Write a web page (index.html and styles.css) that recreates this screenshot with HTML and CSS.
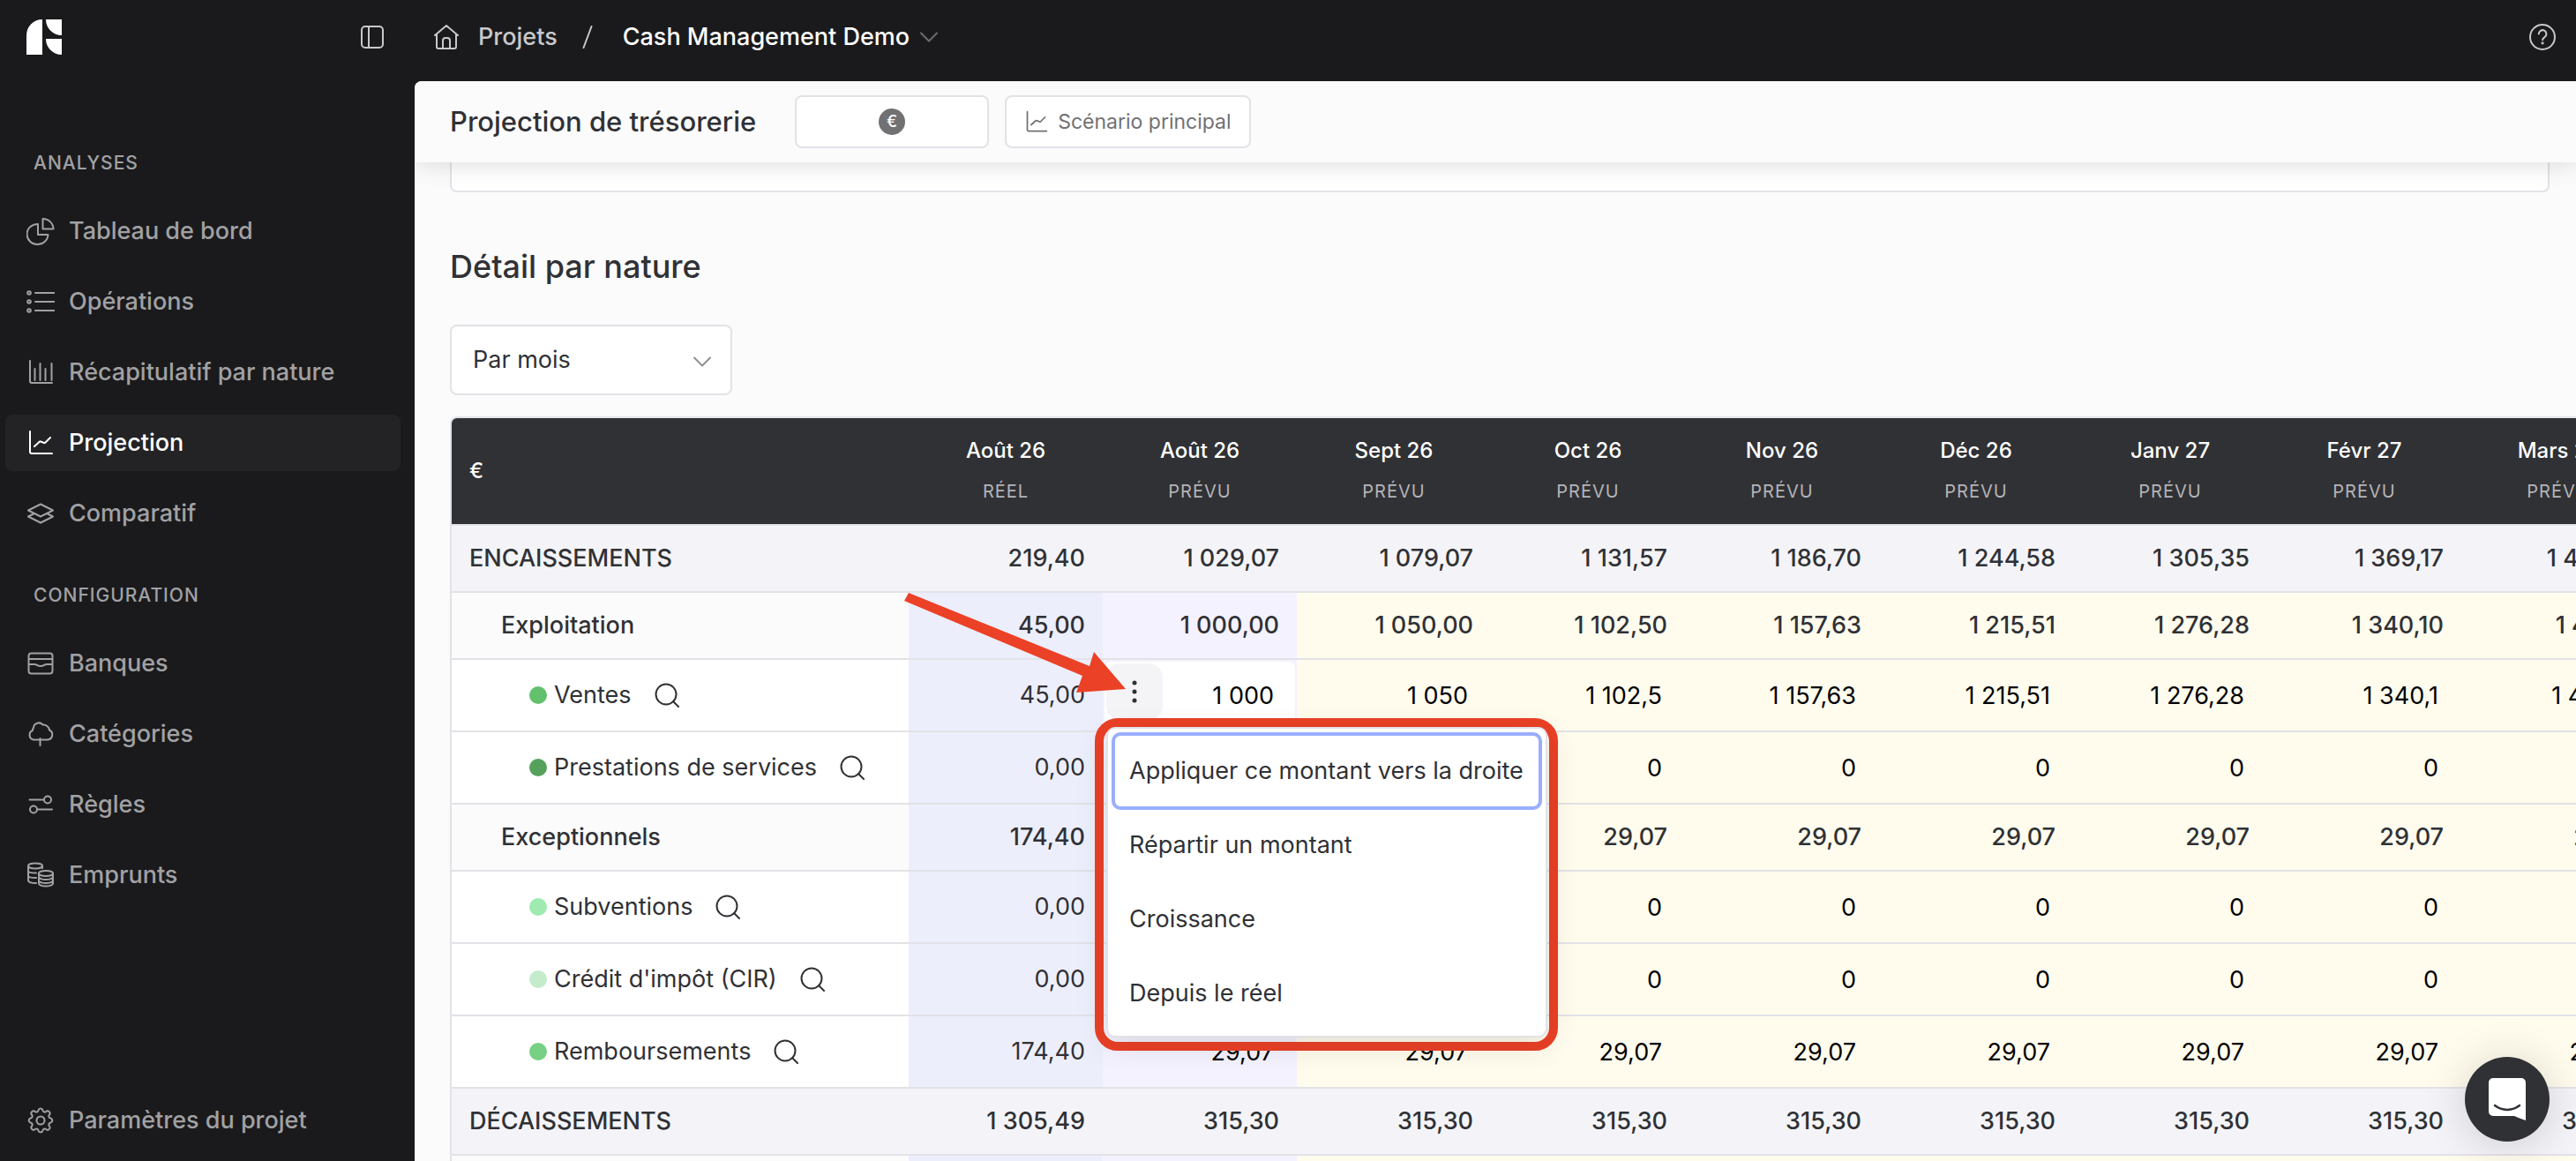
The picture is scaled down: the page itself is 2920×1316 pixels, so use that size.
FILE: index.html
```html
<!DOCTYPE html>
<html lang="fr">
  <head>
    <meta charset="utf-8">
    <title>Projection de trésorerie</title>
    <link rel="stylesheet" href="styles.css">
  </head>
  <body>
    <aside class="sidebar">
      <div class="sidebar-top">
        <a href="#" class="logo" aria-label="Accueil">
          <svg width="40" height="40" viewBox="0 0 40 40"><path d="M18 0v40H0V18A18 18 0 0 1 18 0zM22 0h18v18A18 18 0 0 1 22 0zM22 22h18v18A18 18 0 0 1 22 22z"/></svg>
        </a>
        <button type="button" class="icon-btn" aria-label="Réduire le menu">
          <svg width="32" height="32" viewBox="0 0 32 32"><rect x="4" y="4" width="24" height="24" rx="4"/><path d="M12 4v24"/></svg>
        </button>
      </div>
      <nav class="nav">
        <h3>ANALYSES</h3>
        <a href="#"><svg viewBox="0 0 32 32"><path d="M13 8v12h11.500A12 11.500 0 1 1 13 8z"/><path d="M18.500 2v11.500H30.500A12 11.500 0 0 0 18.500 2z"/></svg>Tableau de bord</a>
        <a href="#"><svg viewBox="0 0 32 32"><circle cx="3" cy="6" r="1.800"/><circle cx="3" cy="16" r="1.800"/><circle cx="3" cy="26" r="1.800"/><path d="M10 6h22M10 16h22M10 26h22"/></svg>Opérations</a>
        <a href="#"><svg viewBox="0 0 32 32"><path d="M4 3v23a2 2 0 0 0 2 2h23M9.500 12v13M15.500 6v19M21.500 12v13M28.500 6v19"/></svg>Récapitulatif par nature</a>
        <a href="#" class="active"><svg viewBox="0 0 32 32"><path d="M4 3v23a2 2 0 0 0 2 2h23M9 20l6-5.500a1 1 0 0 1 1 0l4 1.500a1 1 0 0 0 1 0l6-6"/></svg>Projection</a>
        <a href="#"><svg viewBox="0 0 32 32"><path d="M16 5.500l14 7-14 7-14-7z"/><path d="M8 16.500l-6 3 14 7 14-7-6-3"/></svg>Comparatif</a>
        <h3 class="second">CONFIGURATION</h3>
        <a href="#"><svg viewBox="0 0 32 32"><rect x="2.500" y="4.500" width="27" height="23" rx="3"/><path d="M3 11h26M3 17h6c3 0 3 2 7 2s4-2 7-2h6"/></svg>Banques</a>
        <a href="#"><svg viewBox="0 0 32 32"><path d="M8 22.500a5.500 5.500 0 0 1-1-10.500 4 4 0 0 1 1-3 6 6 0 0 1 10.500-3.500 7 7 0 0 1 7.500 6 5.800 5.800 0 0 1-2 11zM15.500 21v8"/></svg>Catégories</a>
        <a href="#"><svg viewBox="0 0 32 32"><path d="M3.500 10.500h16M12 21.500h17"/><circle cx="24" cy="10.500" r="4"/><circle cx="8" cy="21.500" r="4"/></svg>Règles</a>
        <a href="#"><svg viewBox="0 0 32 32"><ellipse cx="10" cy="5.500" rx="8" ry="3"/><path d="M2 5.500V22c0 1.500 3 3 9 3M18 5.500V8M2 11c0 1.500 3 2.600 9 2.600M2 16.500c0 1.500 3 2.600 9 2.600"/><ellipse cx="22" cy="14" rx="8" ry="3"/><path d="M14 14v11.500c0 1.600 3.500 3 8 3s8-1.400 8-3V14M14 18c0 1.600 3.500 3 8 3s8-1.400 8-3M14 22c0 1.600 3.500 3 8 3s8-1.400 8-3"/></svg>Emprunts</a>
        <a href="#" class="last"><svg viewBox="0 0 32 32"><path d="M13.500 4.500a2.600 2.600 0 0 1 5 0c.4 1.900 2 2.500 3.600 1.600a2.600 2.600 0 0 1 3.700 3.700c-1 1.600-.3 3.200 1.600 3.700a2.600 2.600 0 0 1 0 5c-1.900.5-2.600 2.100-1.600 3.700a2.600 2.600 0 0 1-3.700 3.700c-1.600-1-3.200-.3-3.600 1.600a2.600 2.600 0 0 1-5 0c-.4-1.900-2-2.600-3.600-1.600a2.600 2.600 0 0 1-3.700-3.700c1-1.600.3-3.200-1.600-3.700a2.600 2.600 0 0 1 0-5c1.900-.5 2.600-2.100 1.600-3.700a2.600 2.600 0 0 1 3.700-3.700c1.600.9 3.200.3 3.600-1.600z"/><circle cx="16" cy="16" r="4.500"/></svg>Paramètres du projet</a>
      </nav>
    </aside>

    <div class="content">
      <header class="topbar">
        <a href="#" class="crumb">
          <svg width="32" height="32" viewBox="0 0 32 32"><path d="M3 14L16 3l13 11M5 12.500V27a2 2 0 0 0 2 2h18a2 2 0 0 0 2-2V12.500M12 29v-9a3 3 0 0 1 3-3h2a3 3 0 0 1 3 3v9"/></svg>
          Projets
        </a>
        <svg class="slash" width="12" height="26" viewBox="0 0 12 26"><path d="M10.500 1l-9 24"/></svg>
        <button type="button" class="project">
          Cash Management Demo
          <svg width="20" height="12" viewBox="0 0 20 12"><path d="M1 1.500l9 9 9-9"/></svg>
        </button>
        <button type="button" class="icon-btn help" aria-label="Aide">
          <svg width="32" height="32" viewBox="0 0 32 32"><circle cx="16" cy="16" r="14"/><path d="M11.800 12.500a4.300 4.300 0 1 1 6.600 3.600c-1.500 1-2.300 1.600-2.300 3.200"/><circle cx="16.100" cy="22.800" r=".6"/></svg>
        </button>
      </header>

      <main class="main">
        <div class="page-head">
          <h1>Projection de trésorerie</h1>
          <button type="button" class="btn currency" aria-label="Devise"><span>€</span></button>
          <button type="button" class="btn">
            <svg width="28" height="28" viewBox="0 0 32 32"><path d="M4 3v23a2 2 0 0 0 2 2h23M9 20l6-5.500a1 1 0 0 1 1 0l4 1.500a1 1 0 0 0 1 0l6-6"/></svg>
            Scénario principal
          </button>
        </div>

        <div class="chart-card"></div>

        <h2>Détail par nature</h2>

        <div class="select">
          <select aria-label="Période">
            <option>Par mois</option>
            <option>Par trimestre</option>
            <option>Par an</option>
          </select>
          <svg width="20" height="12" viewBox="0 0 20 12"><path d="M1 1.500l9 9 9-9"/></svg>
        </div>

        <div class="table-wrap">
          <table>
            <colgroup><col class="col-name"><col span="9" class="col-month"></colgroup>
            <thead>
              <tr id="months"><th scope="col" class="unit">€</th></tr>
            </thead>
            <tbody id="rows"></tbody>
          </table>

          <button type="button" class="cell-btn" aria-label="Options du montant">
            <svg width="6" height="26" viewBox="0 0 6 26"><circle cx="3" cy="3" r="2.500"/><circle cx="3" cy="13" r="2.500"/><circle cx="3" cy="23" r="2.500"/></svg>
          </button>
          <div class="menu-frame">
            <div class="menu" role="menu">
              <button type="button" role="menuitem" class="focused">Appliquer ce montant vers la droite</button>
              <button type="button" role="menuitem">Répartir un montant</button>
              <button type="button" role="menuitem">Croissance</button>
              <button type="button" role="menuitem">Depuis le réel</button>
            </div>
          </div>
          <svg class="arrow" width="252" height="116" viewBox="0 0 252 116"><path d="M5 0L210 83l5-16 36 42-56 4 7-19L0 9z"/></svg>
        </div>
      </main>
    </div>

    <button type="button" class="chat" aria-label="Ouvrir la messagerie">
      <svg width="42" height="48" viewBox="0 0 42 48"><path class="bubble" d="M5 0h32a5 5 0 0 1 5 5v43c-5-1.500-9-3.500-13-5H5a5 5 0 0 1-5-5V5a5 5 0 0 1 5-5z"/><path class="smile" d="M7 31c8 6.500 20 6.500 28 0"/></svg>
    </button>

    <script src="table.js"></script>
  </body>
</html>
```
FILE: table.js
```js
(function() {
  var months = ['Août 26', 'Août 26', 'Sept 26', 'Oct 26', 'Nov 26', 'Déc 26', 'Janv 27', 'Févr 27', 'Mars 27'];

  // the first value is the actual amount, the next ones are planned
  var rows = [
    { type: 'total', name: 'ENCAISSEMENTS', values: ['219,40', '1 029,07', '1 079,07', '1 131,57', '1 186,70', '1 244,58', '1 305,35', '1 369,17', '1 436,18'] },
    { type: 'group', name: 'Exploitation', values: ['45,00', '1 000,00', '1 050,00', '1 102,50', '1 157,63', '1 215,51', '1 276,28', '1 340,10', '1 407,11'] },
    { type: 'item', name: 'Ventes', color: '#63c06c', values: ['45,00', '1 000', '1 050', '1 102,5', '1 157,63', '1 215,51', '1 276,28', '1 340,1', '1 407,11'] },
    { type: 'item', name: 'Prestations de services', color: '#55a15c', values: ['0,00', '0', '0', '0', '0', '0', '0', '0', '0'] },
    { type: 'group', name: 'Exceptionnels', values: ['174,40', '29,07', '29,07', '29,07', '29,07', '29,07', '29,07', '29,07', '29,07'] },
    { type: 'item', name: 'Subventions', color: '#9eeab0', values: ['0,00', '0', '0', '0', '0', '0', '0', '0', '0'] },
    { type: 'item', name: "Crédit d'impôt (CIR)", color: '#c5ebcd', values: ['0,00', '0', '0', '0', '0', '0', '0', '0', '0'] },
    { type: 'item', name: 'Remboursements', color: '#77d083', values: ['174,40', '29,07', '29,07', '29,07', '29,07', '29,07', '29,07', '29,07', '29,07'] },
    { type: 'total', name: 'DÉCAISSEMENTS', values: ['1 305,49', '315,30', '315,30', '315,30', '315,30', '315,30', '315,30', '315,30', '315,30'] },
    { type: 'group', name: '', values: ['', '', '', '', '', '', '', '', ''] }
  ];

  var search = '<svg width="28" height="28" viewBox="0 0 28 28"><circle cx="13" cy="13" r="11.500"/><path d="M21 21l6 6"/></svg>';

  var head = '';
  months.forEach(function(m, i) {
    head += '<th scope="col">' + m + '<small>' + (i ? 'PRÉVU' : 'RÉEL') + '</small></th>';
  });
  document.getElementById('months').innerHTML += head;

  var s = '';
  rows.forEach(function(row) {
    var name = row.name;
    if (row.type === 'item') {
      name = '<div class="name"><i class="dot" style="background: ' + row.color + '"></i>' + row.name +
        '<button type="button" aria-label="Rechercher ' + row.name + '">' + search + '</button></div>';
    }
    s += '<tr class="' + row.type + '"><th scope="row">' + name + '</th>';
    row.values.forEach(function(v, i) {
      v = v.replace(' ', '\u00a0');
      if (row.type === 'item' && i) {
        v = '<input type="text" value="' + v + '" aria-label="' + row.name + ', ' + months[i] + '">';
      }
      s += '<td>' + v + '</td>';
    });
    s += '</tr>';
  });
  document.getElementById('rows').innerHTML = s;
}());
```
FILE: styles.css
```css
* {
  box-sizing: border-box;
}
body {
  margin: 0;
  display: flex;
  height: 100vh;
  overflow: hidden;
  background: #1a1a1c;
  color: #303135;
  font-family: Inter, "Liberation Sans", sans-serif;
  font-size: 27px;
  line-height: 36px;
}
svg {
  flex: none;
  fill: none;
  stroke: currentColor;
  stroke-width: 2;
  stroke-linecap: round;
  stroke-linejoin: round;
}
button, input, select {
  font: inherit;
  color: inherit;
}
button {
  padding: 0;
  border: 0;
  background: none;
}
a {
  color: inherit;
  text-decoration: none;
}
h1, h2, h3 {
  margin: 0;
  font-weight: 500;
}

/* sidebar */
.sidebar {
  flex: none;
  width: 470px;
  padding: 0 16px 14px 6px;
  display: flex;
  flex-direction: column;
  color: #a1a1a4;
}
.sidebar-top {
  display: flex;
  align-items: center;
  justify-content: space-between;
  height: 84px;
  padding: 0 16px 0 24px;
}
.logo, .icon-btn {
  display: flex;
}
.logo svg {
  fill: #fff;
  stroke: none;
}
.icon-btn {
  color: #c8c8ca;
}
.nav {
  flex: 1;
  display: flex;
  flex-direction: column;
  gap: 16px;
}
.nav h3 {
  margin-top: 86px;
  margin-bottom: 14px;
  padding-left: 32px;
  font-size: 21px;
  line-height: 30px;
  letter-spacing: 1px;
}
.nav h3.second {
  margin-top: 30px;
}
.nav a {
  display: flex;
  align-items: center;
  gap: 16px;
  height: 64px;
  padding-left: 24px;
  border-radius: 8px;
  font-weight: 500;
}
.nav a svg {
  width: 32px;
  height: 32px;
}
.nav a.active {
  background: #232325;
  color: #fff;
}
.nav a.last {
  margin-top: auto;
}

/* top bar */
.content {
  flex: 1;
  min-width: 0;
  display: flex;
  flex-direction: column;
}
.topbar {
  flex: none;
  display: flex;
  align-items: center;
  height: 92px;
  padding: 0 22px 8px 20px;
  color: #c8c8ca;
}
.crumb {
  display: flex;
  align-items: center;
  gap: 20px;
  font-weight: 500;
}
.slash {
  margin: 0 34px 0 28px;
}
.project {
  display: flex;
  align-items: center;
  gap: 12px;
  color: #fff;
  font-weight: 500;
}
.project svg {
  color: #6c6c70;
}
.help {
  margin-left: auto;
}

/* page */
.main {
  flex: 1;
  min-height: 0;
  overflow: hidden;
  background: #fbfbfc;
  border-top-left-radius: 8px;
}
.page-head {
  position: relative;
  z-index: 1;
  display: flex;
  align-items: center;
  gap: 18px;
  height: 92px;
  padding: 0 40px;
  background: #fbfbfc;
  box-shadow: 0 0 30px rgba(0, 0, 0, .16);
}
h1 {
  margin-right: 26px;
  font-size: 31px;
}
.btn {
  display: flex;
  align-items: center;
  justify-content: center;
  gap: 10px;
  height: 60px;
  padding: 0 20px;
  border: 2px solid #e2e2e7;
  border-radius: 8px;
  background: #fff;
  color: #717174;
  font-size: 23px;
}
.currency {
  width: 220px;
}
.currency span {
  width: 30px;
  height: 30px;
  border-radius: 50%;
  background: #717174;
  color: #fff;
  font-size: 18px;
  font-weight: 500;
  line-height: 30px;
}
.chart-card {
  height: 34px;
  margin: 0 30px 0 40px;
  border: 2px solid #e2e2e7;
  border-top: 0;
  border-radius: 0 0 8px 8px;
  background: #fff;
}
h2 {
  margin: 64px 40px 46px;
  font-size: 36px;
  line-height: 40px;
}
.select {
  position: relative;
  width: 320px;
  margin: 0 40px 24px;
}
.select select {
  display: block;
  width: 100%;
  height: 80px;
  padding: 0 24px;
  border: 2px solid #e2e2e7;
  border-radius: 8px;
  background: #fff;
  appearance: none;
}
.select svg {
  position: absolute;
  right: 24px;
  top: 36px;
  color: #8f8f93;
  pointer-events: none;
}

/* table */
.table-wrap {
  position: relative;
  margin-left: 40px;
  border: 2px solid #e2e2e7;
  border-right: 0;
  border-radius: 8px 0 0 0;
}
table {
  table-layout: fixed;
  width: 2498px;
  border-spacing: 0;
}
.col-name {
  width: 518px;
}
.col-month {
  width: 220px;
}
th, td {
  padding: 0;
  border-bottom: 2px solid #e2e2e7;
}
thead th {
  height: 122px;
  background: #303135;
  color: #fff;
  font-size: 24px;
  font-weight: 500;
  line-height: 32px;
}
thead th:first-child {
  border-top-left-radius: 6px;
}
thead .unit {
  padding-left: 20px;
  text-align: left;
}
thead small {
  display: block;
  margin-top: 14px;
  color: #b4b4b7;
  font-size: 20px;
  font-weight: 400;
  letter-spacing: 1px;
}
tbody th {
  padding-left: 20px;
  text-align: left;
  font-weight: 500;
  background: #fff;
}
tbody td {
  height: 76px;
  padding-right: 20px;
  background: #fffcee;
  text-align: right;
  font-weight: 500;
}
td:nth-child(2) {
  background: #edeefc;
}
td:nth-child(3) {
  background: #f4f2fe;
}
.total th, .total td {
  background: #f4f4f8;
}
.group th {
  padding-left: 56px;
  background: #fbfbfc;
}
.item th, .item td {
  height: 82px;
  font-weight: 400;
}
.item th {
  padding-left: 88px;
}
.name {
  display: flex;
  align-items: center;
  gap: 8px;
}
.name button {
  display: flex;
  margin-left: 18px;
}
.dot {
  width: 20px;
  height: 20px;
  border-radius: 50%;
}
.item td:nth-child(n+3) {
  padding: 2px;
}
td input {
  display: block;
  width: 100%;
  height: 76px;
  padding: 0 24px;
  border: 0;
  border-radius: 8px;
  background: transparent;
  color: #000;
  text-align: right;
}
tr:nth-child(3) td:nth-child(3) input {
  background: #fff;
}

/* amount menu, over the table */
.cell-btn {
  position: absolute;
  left: 742px;
  top: 278px;
  width: 64px;
  height: 64px;
  display: flex;
  align-items: center;
  justify-content: center;
  border-radius: 16px;
  background: #f4f4f6;
}
.cell-btn svg {
  fill: #303135;
  stroke: none;
}
.menu-frame {
  position: absolute;
  left: 729px;
  top: 340px;
  width: 525px;
  padding: 0 2px 5px 3px;
  border: 10px solid #eb4127;
  border-radius: 26px;
}
.menu {
  padding: 6px;
  border: 2px solid #e2e2e7;
  border-radius: 10px;
  background: #fff;
  box-shadow: 0 8px 36px rgba(0, 0, 0, .12);
}
.menu button {
  display: block;
  width: 100%;
  height: 84px;
  padding: 0 18px;
  border-radius: 8px;
  text-align: left;
  white-space: nowrap;
}
.menu button.focused {
  outline: 4px solid #9aaefc;
  outline-offset: -2px;
}
.arrow {
  position: absolute;
  left: 513px;
  top: 198px;
  fill: #eb4127;
  stroke: none;
}

.chat {
  position: fixed;
  right: 30px;
  bottom: 22px;
  width: 96px;
  height: 96px;
  display: flex;
  align-items: center;
  justify-content: center;
  border-radius: 50%;
  background: #303135;
  box-shadow: 0 4px 50px rgba(0, 0, 0, .16);
}
.chat .bubble {
  fill: #fff;
  stroke: none;
}
.chat .smile {
  stroke: #303135;
  stroke-width: 2.5;
}
```
